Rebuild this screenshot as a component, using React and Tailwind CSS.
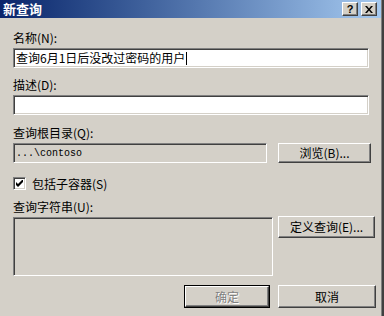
const sunken =
  "border border-t-[#808080] border-l-[#808080] border-b-white border-r-white shadow-[inset_1px_1px_0_#404040,inset_-1px_-1px_0_#d4d0c8]";
const raised =
  "border border-t-white border-l-white border-b-[#404040] border-r-[#404040] shadow-[inset_-1px_-1px_0_#808080] bg-[#d4d0c8]";

function Label({ children, className = "" }) {
  return <div className={`h-[14px] leading-[14px] text-[12px] text-black ${className}`}>{children}</div>;
}

function Button({ children, className = "" }) {
  return (
    <div className={`${raised} flex items-center justify-center text-[12px] leading-[14px] text-black ${className}`}>
      {children}
    </div>
  );
}

function CaptionButton({ children }) {
  return (
    <div className={`${raised} w-[16px] h-[14px] flex items-center justify-center`}>{children}</div>
  );
}

export default function App() {
  return (
    <div
      className="w-[384px] h-[316px] overflow-hidden bg-[#d4d0c8] flex"
      style={{ fontFamily: '"Noto Sans CJK SC", "Liberation Sans", sans-serif' }}
    >
      <div className="flex-1 flex flex-col border-r border-[#808080]">
        <div className="h-[18px] bg-gradient-to-r from-[#0a246a] to-[#a6caf0] flex items-center justify-between pl-[3px] pr-[4px]">
          <span className="text-white font-bold text-[13px] leading-[14px]">新查询</span>
          <div className="flex gap-[3px]">
            <CaptionButton>
              <span className="text-[11px] leading-[11px] font-bold text-black" style={{ fontFamily: '"Liberation Sans", sans-serif' }}>?</span>
            </CaptionButton>
            <CaptionButton>
              <svg width="8" height="7" viewBox="0 0 8 7">
                <path d="M0 0h2l2 2.5L6 0h2L5 3.5 8 7H6L4 4.5 2 7H0l3-3.5z" fill="#000" />
              </svg>
            </CaptionButton>
          </div>
        </div>

        <div className="flex flex-col pl-[13px]">
          <Label className="mt-[13px]">名称(N):</Label>
          <div className={`${sunken} mt-[3px] w-[356px] h-[20px] bg-white flex items-center pl-[2px] text-[12px] leading-[14px] text-black`}>
            查询6月1日后没改过密码的用户
            <span className="w-px h-[13px] bg-black ml-[1px]" />
          </div>

          <Label className="mt-[10px]">描述(D):</Label>
          <div className={`${sunken} mt-[3px] w-[356px] h-[20px] bg-white`} />

          <Label className="mt-[11px]">查询根目录(Q):</Label>
          <div className="mt-[3px] flex items-start">
            <div
              className={`${sunken} w-[254px] h-[20px] flex items-center pl-[2px] text-[10px] text-black`}
              style={{ fontFamily: '"Liberation Mono", monospace' }}
            >
              ...\contoso
            </div>
            <Button className="ml-[11px] w-[93px] h-[20px]">浏览(B)...</Button>
          </div>

          <div className="mt-[14px] flex items-center h-[13px]">
            <div className={`${sunken} w-[13px] h-[13px] bg-white flex items-center justify-center`}>
              <svg width="7" height="7" viewBox="0 0 7 7">
                <path d="M0 2v3l2 2 5-5V-1L2 4z" fill="#000" />
              </svg>
            </div>
            <span className="ml-[6px] text-[12px] leading-[14px] text-black">包括子容器(S)</span>
          </div>

          <Label className="mt-[10px]">查询字符串(U):</Label>
          <div className="mt-[2px] flex items-start">
            <div className={`${sunken} mt-[1px] w-[260px] h-[59px]`} />
            <Button className="ml-[5px] w-[97px] h-[22px]">定义查询(E)...</Button>
          </div>

          <div className="mt-[9px] flex items-start pl-[171px]">
            <div className="border border-black">
              <Button className="w-[84px] h-[21px]">
                <span className="text-[#808080] [text-shadow:1px_1px_0_#fff]">确定</span>
              </Button>
            </div>
            <Button className="ml-[8px] w-[98px] h-[23px]">取消</Button>
          </div>
        </div>
      </div>
      <div className="w-[2px] bg-[#404040]" />
    </div>
  );
}
